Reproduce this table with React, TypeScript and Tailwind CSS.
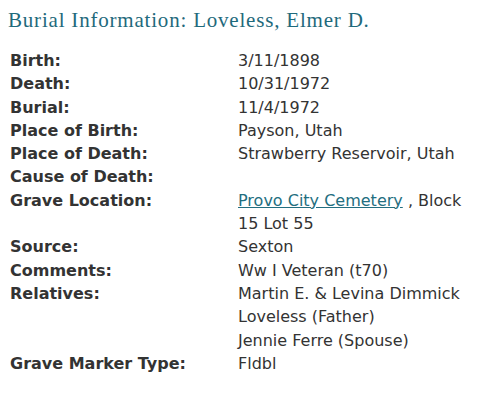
const rows: { label: string; value: React.ReactNode }[] = [
  { label: "Birth:", value: "3/11/1898" },
  { label: "Death:", value: "10/31/1972" },
  { label: "Burial:", value: "11/4/1972" },
  { label: "Place of Birth:", value: "Payson, Utah" },
  { label: "Place of Death:", value: "Strawberry Reservoir, Utah" },
  { label: "Cause of Death:", value: "" },
  {
    label: "Grave Location:",
    value: (
      <>
        <a href="#" className="text-[#236e80] underline">
          Provo City Cemetery
        </a>{" "}
        , Block 15 Lot 55
      </>
    ),
  },
  { label: "Source:", value: "Sexton" },
  { label: "Comments:", value: "Ww I Veteran (t70)" },
  {
    label: "Relatives:",
    value: (
      <>
        Martin E. &amp; Levina Dimmick Loveless (Father)
        <br />
        Jennie Ferre (Spouse)
      </>
    ),
  },
  { label: "Grave Marker Type:", value: "Fldbl" },
]

export default function App() {
  return (
    <div className="w-[484px] h-[409px] bg-white pl-2 pt-[6px] font-['DejaVu_Sans',sans-serif] text-[#333]">
      <h2 className="font-['Liberation_Serif',serif] text-[21px] leading-[28px] tracking-[0.8px] text-[#1f6a7c]">
        Burial Information: Loveless, Elmer D.
      </h2>
      <div className="mt-[15px] grid grid-cols-[228px_240px] pl-[2px] text-[16px] leading-[23.3px]">
        {rows.map((r) => (
          <div key={r.label} className="contents">
            <div className="font-bold">{r.label}</div>
            <div>{r.value}</div>
          </div>
        ))}
      </div>
    </div>
  )
}
